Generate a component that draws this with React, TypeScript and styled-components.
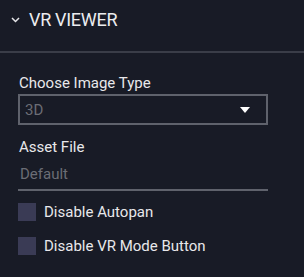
import React from 'react';
import styled, { createGlobalStyle } from 'styled-components';

const GlobalStyle = createGlobalStyle`
    html, body {
        margin: 0;
        padding: 0;
        background: #181b26;
    }
    body {
        font-family: Roboto, "Liberation Sans", sans-serif;
        color: #e6e6e9;
    }
`;

const Panel = styled.div`
    width: 304px;
    height: 277px;
    background: #181b26;
    overflow: hidden;
`;

const Header = styled.div`
    display: flex;
    align-items: center;
    gap: 9px;
    height: 53px;
    padding: 9px 0 0 11px;
    box-sizing: border-box;
    align-content: flex-start;
    flex-wrap: wrap;
    border-bottom: 2px solid #3a3d48;
`;

const HeaderTitle = styled.span`
    font-size: 18px;
    line-height: 21px;
    letter-spacing: -0.3px;
    color: #ececef;
`;

const Body = styled.div`
    display: flex;
    flex-direction: column;
    width: 250px;
    padding: 21px 0 0 18px;
`;

const Label = styled.div`
    font-size: 15px;
    line-height: 18px;
    color: #e8e8eb;
    padding-left: 1px;
`;

const SelectBox = styled.div`
    margin-top: 2px;
    height: 31px;
    box-sizing: border-box;
    border: 2px solid #5f626c;
    display: flex;
    align-items: center;
    justify-content: space-between;
    padding: 0 16px 0 5px;
`;

const Placeholder = styled.span`
    font-size: 15px;
    line-height: 18px;
    color: #6b6d75;
`;

const Field = styled.div<{ top: number }>`
    margin-top: ${props => props.top}px;
    display: flex;
    flex-direction: column;
`;

const TextInput = styled.div`
    display: flex;
    padding: 9px 0 6px 2px;
    border-bottom: 2px solid #5f626c;
`;

const CheckRow = styled.div<{ top: number }>`
    margin-top: ${props => props.top}px;
    display: flex;
    align-items: center;
    gap: 8px;
    height: 18px;
`;

const Box = styled.span`
    width: 18px;
    height: 18px;
    background: #3a3b55;
    flex-shrink: 0;
`;

const CheckText = styled.span`
    font-size: 15px;
    line-height: 18px;
    color: #e8e8eb;
`;

const Chevron = () => (
    <svg width="9" height="6" viewBox="0 0 9 6">
        <path d="M1 1 L4.5 4.5 L8 1" fill="none" stroke="#e6e6e9" strokeWidth="1.5" />
    </svg>
);

const Caret = () => (
    <svg width="10" height="6" viewBox="0 0 10 6">
        <path d="M0 0 H10 L5 6 Z" fill="#ffffff" />
    </svg>
);

const App = () => {
    return (
        <Panel>
            <GlobalStyle />
            <Header>
                <Chevron />
                <HeaderTitle>VR VIEWER</HeaderTitle>
            </Header>
            <Body>
                <Label>Choose Image Type</Label>
                <SelectBox>
                    <Placeholder>3D</Placeholder>
                    <Caret />
                </SelectBox>
                <Field top={13}>
                    <Label>Asset File</Label>
                    <TextInput>
                        <Placeholder>Default</Placeholder>
                    </TextInput>
                </Field>
                <CheckRow top={12}>
                    <Box />
                    <CheckText>Disable Autopan</CheckText>
                </CheckRow>
                <CheckRow top={16}>
                    <Box />
                    <CheckText>Disable VR Mode Button</CheckText>
                </CheckRow>
            </Body>
        </Panel>
    );
};

export default App;
